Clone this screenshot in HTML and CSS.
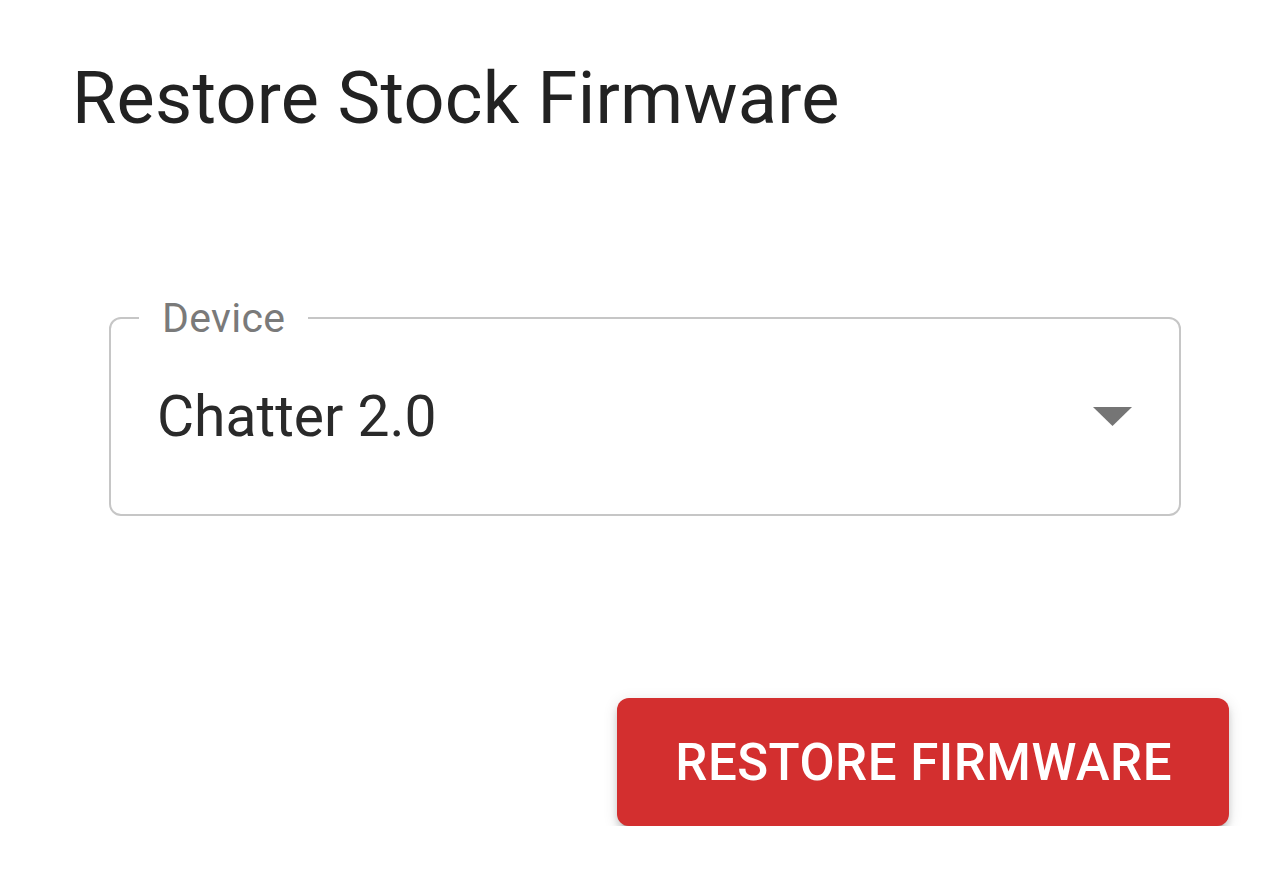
FILE: index.html
```html
<!DOCTYPE html>
<html lang="en">
<head>
  <meta charset="UTF-8" />
  <meta name="viewport" content="width=device-width, initial-scale=1.0"/>
  <title>Restore Stock Firmware</title>
  <link rel="stylesheet" href="styles.css">
</head>
<body>
  <div class="dialog">
    <h2 class="dialog-title">Restore Stock Firmware</h2>

    <div class="dialog-content">
      <fieldset class="select-field">
        <legend>Device</legend>
        <div class="select-row">
          <span class="select-value">Chatter 2.0</span>
          <svg class="select-arrow" viewBox="0 0 39 19" width="39" height="19">
            <path d="M0 0 L39 0 L19.5 19 Z" fill="#757575"/>
          </svg>
        </div>
      </fieldset>
    </div>

    <div class="dialog-actions">
      <button class="btn-restore">Restore Firmware</button>
    </div>
  </div>
</body>
</html>
```

FILE: styles.css
```css
body {
  margin: 0;
  padding: 0;
  background-color: #ffffff;
  font-family: Roboto, "Liberation Sans", Arial, sans-serif;
  color: rgba(0, 0, 0, 0.87);
}

.dialog {
  display: flex;
  flex-direction: column;
  padding: 56px 51px 0 72px;
}

.dialog-title {
  margin: 0;
  font-size: 72px;
  font-weight: 400;
  line-height: 1.2;
  letter-spacing: 0.25px;
  color: #222;
}

.dialog-content {
  margin-top: 155px;
  padding-left: 37px;
  padding-right: 48px;
}

.select-field {
  margin: 0;
  padding: 0 47px 0 28px;
  border: 2px solid #c6c6c6;
  border-radius: 12px;
}

.select-field legend {
  padding: 0 23px 0 23px;
  font-size: 41px;
  line-height: 42px;
  letter-spacing: 0.3px;
  color: #7a7a7a;
}

.select-row {
  display: flex;
  align-items: center;
  justify-content: space-between;
  height: 195px;
  margin-top: -20px;
  padding-left: 18px;
}

.select-value {
  font-size: 57px;
  color: #2a2a2a;
}

.select-arrow {
  display: block;
}

.dialog-actions {
  display: flex;
  justify-content: flex-end;
  margin-top: 182px;
}

.btn-restore {
  height: 128px;
  padding: 0 57px 0 58px;
  border: none;
  border-radius: 12px;
  background-color: #d32f2f;
  color: #ffffff;
  font-family: Roboto, "Liberation Sans", Arial, sans-serif;
  font-size: 51px;
  font-weight: 500;
  text-transform: uppercase;
  letter-spacing: 0.5px;
  cursor: pointer;
  box-shadow: 0 9px 3px -6px rgba(0, 0, 0, 0.2), 0 6px 6px 0 rgba(0, 0, 0, 0.14), 0 3px 15px 0 rgba(0, 0, 0, 0.12);
}
```
